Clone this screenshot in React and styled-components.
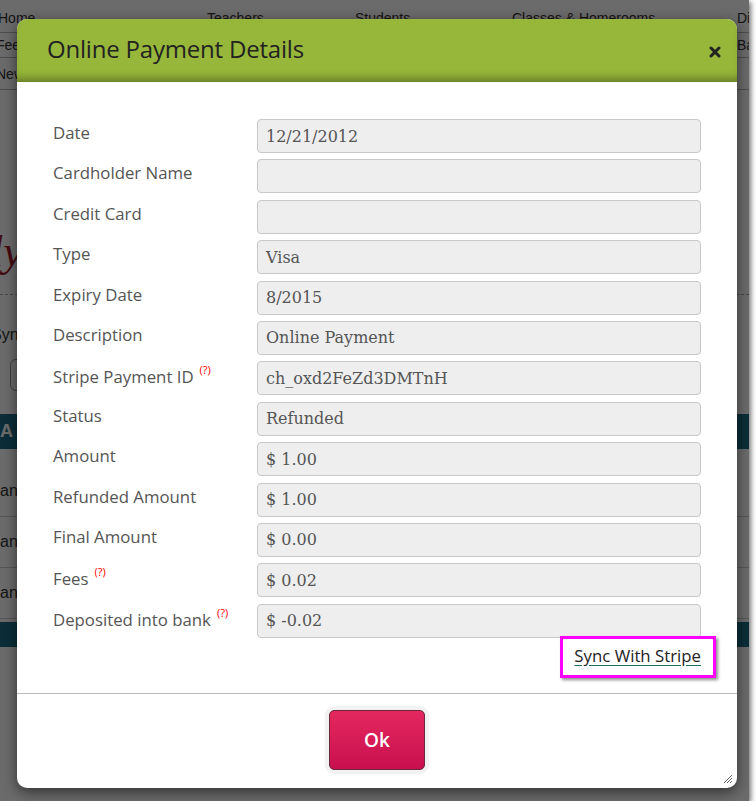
import React from 'react'
import styled, { createGlobalStyle } from 'styled-components'

const GlobalStyle = createGlobalStyle`
  html, body {
    margin: 0;
    padding: 0;
    background: #fff;
  }
  body {
    font-family: "Open Sans", "Liberation Sans", sans-serif;
  }
`

const Frame = styled.div`
  position: relative;
  width: 749px;
  height: 801px;
  overflow: hidden;
  background: #fff;
  box-shadow: 2px 2px 5px rgba(0, 0, 0, 0.55);
`

// the page that sits under the dialog
const Page = styled.div`
  display: flex;
  flex-direction: column;
  height: 100%;
  font-family: "Liberation Sans", Arial, sans-serif;
  font-size: 14px;
  color: #333;
`

const NavRow = styled.div`
  display: flex;
  height: ${({ h }) => h || 26}px;
  align-items: center;
  padding-top: ${({ pt }) => pt || 0}px;
  box-sizing: border-box;
  border-bottom: 1px solid ${({ line }) => line || 'transparent'};
  position: relative;
`

const NavItem = styled.span`
  position: absolute;
  left: ${({ x }) => x}px;
  white-space: nowrap;
`

const Logo = styled.div`
  height: 60px;
  margin: 132px 0 0 -9px;
  font-family: "Liberation Serif", serif;
  font-style: italic;
  font-size: 44px;
  color: #a01c2c;
  line-height: 60px;
`

const Dashed = styled.div`
  height: 0;
  border-top: 1px dashed #aaa;
  margin: 12px 0 0;
`

const SyncRow = styled.div`
  height: 40px;
  display: flex;
  align-items: center;
  padding-top: 20px;
  margin-left: -9px;
  font-size: 16px;
`

const GhostBox = styled.div`
  width: 60px;
  height: 30px;
  margin: 4px 0 0 10px;
  border: 1px solid #999;
  border-radius: 6px;
`

const Band = styled.div`
  height: ${({ h }) => h}px;
  margin-top: ${({ mt }) => mt || 0}px;
  background: #1e6f86;
  color: #fff;
  font-weight: bold;
  font-size: 18px;
  display: flex;
  align-items: center;
`

const TableRow = styled.div`
  height: 50px;
  margin-top: ${({ mt }) => mt || 0}px;
  display: flex;
  align-items: center;
  border-bottom: 1px solid #ccc;
  font-size: 16px;
`

const Backdrop = styled.div`
  position: absolute;
  inset: 0;
  background: rgba(0, 0, 0, 0.58);
`

const Modal = styled.div`
  position: absolute;
  left: 17px;
  top: 19px;
  width: 720px;
  height: 769px;
  display: flex;
  flex-direction: column;
  background: #fff;
  border-radius: 10px;
  box-shadow: 0 4px 14px rgba(0, 0, 0, 0.55);
`

const Header = styled.div`
  height: 63px;
  flex: none;
  display: flex;
  align-items: center;
  justify-content: space-between;
  padding: 0 16px 0 30px;
  background: #97b73a;
  border-radius: 10px 10px 0 0;
  box-shadow: inset 0 -9px 8px -5px rgba(0, 0, 0, 0.32);
`

const Title = styled.h1`
  margin: 0 0 4px;
  font-family: "Open Sans", sans-serif;
  font-weight: 400;
  font-size: 24px;
  color: #222;
  letter-spacing: -0.2px;
`

const CloseIcon = styled.svg`
  width: 12px;
  height: 12px;
  margin-top: 2px;
`

const Body = styled.div`
  padding: 37px 36px 15px;
  display: flex;
  flex-direction: column;
`

const Form = styled.div`
  display: grid;
  grid-template-columns: 204px 1fr;
  row-gap: 6.4px;
`

const Label = styled.div`
  font-size: 16.8px;
  color: #555;
  padding-top: ${({ help }) => (help ? 6 : 4)}px;
  line-height: 20px;
  white-space: nowrap;
`

const Help = styled.sup`
  color: #f00;
  font-size: 11px;
  line-height: 0;
  margin-left: 6px;
  vertical-align: 9px;
`

const Field = styled.div`
  height: 34px;
  box-sizing: border-box;
  padding: 0 8px;
  display: flex;
  align-items: center;
  background: #eee;
  border: 1px solid #c8c8c8;
  border-radius: 4px;
  font-family: "DejaVu Serif", "Liberation Serif", serif;
  font-size: 16px;
  color: #555;
`

const SyncLine = styled.div`
  display: flex;
  justify-content: flex-end;
  margin-top: -2px;
  margin-right: -15px;
`

const Highlight = styled.div`
  border: 3px solid #ff00ff;
  padding: 6px 12px 8px 11px;
  box-shadow: 2px 2px 3px rgba(0, 0, 0, 0.45);
`

const SyncLink = styled.a`
  font-family: "Open Sans", sans-serif;
  font-size: 16.8px;
  line-height: 22px;
  color: #222;
  text-decoration: underline;
  text-decoration-color: #1b6b6b;
  text-underline-offset: 3px;
  cursor: pointer;
`

const Footer = styled.div`
  border-top: 1px solid #bbb;
  flex: 1;
  display: flex;
  justify-content: center;
  align-items: flex-start;
  padding-top: 16px;
  position: relative;
`

const OkButton = styled.button`
  width: 96px;
  height: 60px;
  border: 1px solid #6a2a3c;
  border-radius: 5px;
  background: linear-gradient(#e4285f, #c9104f);
  color: #fff;
  font-family: "Open Sans", sans-serif;
  font-size: 19px;
  font-weight: 600;
  box-shadow: 0 0 0 4px #f2f2f2;
  cursor: pointer;
`

const Grip = styled.svg`
  position: absolute;
  right: 4px;
  bottom: 4px;
  width: 12px;
  height: 12px;
`

const rows = [
  { label: 'Date', value: '12/21/2012' },
  { label: 'Cardholder Name', value: '' },
  { label: 'Credit Card', value: '' },
  { label: 'Type', value: 'Visa' },
  { label: 'Expiry Date', value: '8/2015' },
  { label: 'Description', value: 'Online Payment' },
  { label: 'Stripe Payment ID', value: 'ch_oxd2FeZd3DMTnH', help: true },
  { label: 'Status', value: 'Refunded' },
  { label: 'Amount', value: '$ 1.00' },
  { label: 'Refunded Amount', value: '$ 1.00' },
  { label: 'Final Amount', value: '$ 0.00' },
  { label: 'Fees', value: '$ 0.02', help: true },
  { label: 'Deposited into bank', value: '$ -0.02', help: true },
]

const App = () => {
  return (
    <>
      <GlobalStyle />
      <Frame>
        <Page>
          <NavRow h={33} pt={4} line="#bbb">
            <NavItem x={-2}>Home</NavItem>
            <NavItem x={207}>Teachers</NavItem>
            <NavItem x={355}>Students</NavItem>
            <NavItem x={512}>Classes &amp; Homerooms</NavItem>
            <NavItem x={737}>Dis</NavItem>
          </NavRow>
          <NavRow h={25} line="#bbb">
            <NavItem x={-4}>Fee</NavItem>
            <NavItem x={737}>Ba</NavItem>
          </NavRow>
          <NavRow h={32} line="#bbb">
            <NavItem x={-4}>New</NavItem>
          </NavRow>
          <Logo>ly</Logo>
          <Dashed />
          <SyncRow>Sync</SyncRow>
          <GhostBox />
          <Band h={35} mt={23}>A</Band>
          <TableRow mt={17}>an</TableRow>
          <TableRow>an</TableRow>
          <TableRow>an</TableRow>
          <Band h={25} mt={3} />
        </Page>
        <Backdrop />
        <Modal>
          <Header>
            <Title>Online Payment Details</Title>
            <CloseIcon viewBox="0 0 12 12">
              <path d="M2 2 L10 10 M10 2 L2 10" stroke="#222" strokeWidth="3" strokeLinecap="round" />
            </CloseIcon>
          </Header>
          <Body>
            <Form>
              {rows.map((r) => (
                <React.Fragment key={r.label}>
                  <Label help={r.help}>
                    {r.label}
                    {r.help && <Help>(?)</Help>}
                  </Label>
                  <Field>{r.value}</Field>
                </React.Fragment>
              ))}
            </Form>
            <SyncLine>
              <Highlight>
                <SyncLink>Sync With Stripe</SyncLink>
              </Highlight>
            </SyncLine>
          </Body>
          <Footer>
            <OkButton>Ok</OkButton>
            <Grip viewBox="0 0 12 12">
              <path d="M11 3 L3 11 M11 6 L6 11 M11 9 L9 11" stroke="#666" strokeWidth="1" />
            </Grip>
          </Footer>
        </Modal>
      </Frame>
    </>
  )
}

export default App
